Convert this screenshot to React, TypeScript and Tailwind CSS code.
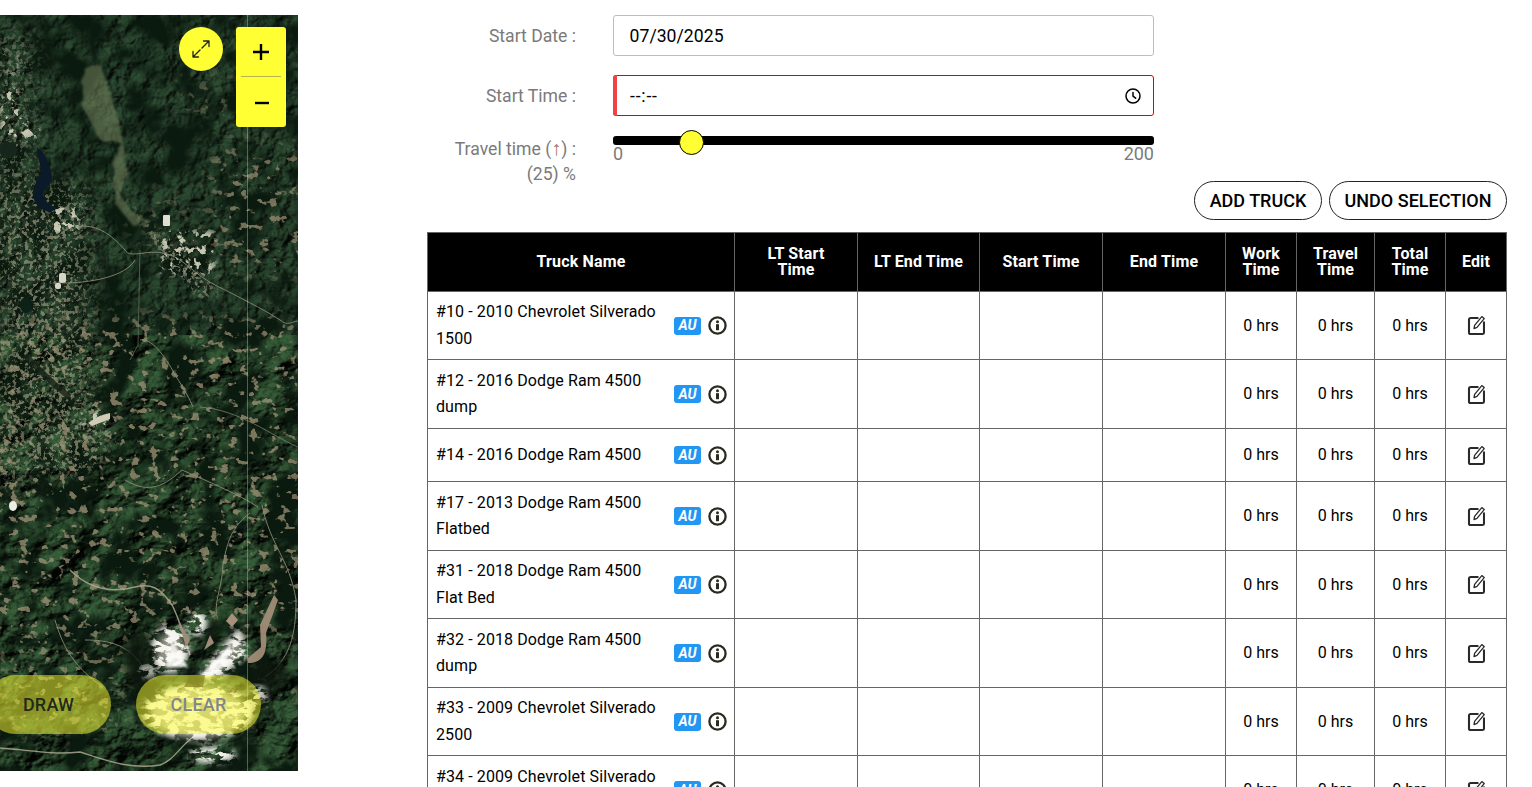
import React from "react";

function MapArt() {
  return (
    <svg viewBox="0 0 298 756" className="block w-full h-full" preserveAspectRatio="none">
      <defs>
        <filter id="terrain" x="0" y="0" width="100%" height="100%" colorInterpolationFilters="sRGB">
          <feTurbulence type="fractalNoise" baseFrequency="0.022 0.03" numOctaves="6" seed="12" />
          <feDiffuseLighting surfaceScale="16" diffuseConstant="1" lightingColor="#3f6a42">
            <feDistantLight azimuth="215" elevation="42" />
          </feDiffuseLighting>
        </filter>
        <filter id="flat" x="0" y="0" width="100%" height="100%" colorInterpolationFilters="sRGB">
          <feTurbulence type="fractalNoise" baseFrequency="0.07" numOctaves="4" seed="5" />
          <feDiffuseLighting surfaceScale="7" diffuseConstant="1" lightingColor="#33543a">
            <feDistantLight azimuth="215" elevation="50" />
          </feDiffuseLighting>
        </filter>
        <filter id="dark" x="0" y="0" width="100%" height="100%" colorInterpolationFilters="sRGB">
          <feTurbulence type="fractalNoise" baseFrequency="0.03" numOctaves="3" seed="41" />
          <feColorMatrix type="matrix" values="0 0 0 0 0.04  0 0 0 0 0.1  0 0 0 0 0.06  4 0 0 0 -1.75" />
        </filter>
        <filter id="clear" x="0" y="0" width="100%" height="100%" colorInterpolationFilters="sRGB">
          <feTurbulence type="fractalNoise" baseFrequency="0.1 0.12" numOctaves="3" seed="23" />
          <feColorMatrix type="matrix" values="0 0 0 0 0.62  0 0 0 0 0.57  0 0 0 0 0.46  12 0 0 0 -7.5" />
          <feGaussianBlur stdDeviation="0.7" />
        </filter>
        <filter id="urban" x="0" y="0" width="100%" height="100%" colorInterpolationFilters="sRGB">
          <feTurbulence type="fractalNoise" baseFrequency="0.24" numOctaves="3" seed="9" />
          <feColorMatrix type="matrix" values="0 0 0 0 0.6  0 0 0 0 0.59  0 0 0 0 0.49  8 0 0 0 -4.1" />
          <feGaussianBlur stdDeviation="0.6" />
        </filter>
        <filter id="bright" x="0" y="0" width="100%" height="100%" colorInterpolationFilters="sRGB">
          <feTurbulence type="fractalNoise" baseFrequency="0.13" numOctaves="3" seed="31" />
          <feColorMatrix type="matrix" values="0 0 0 0 0.85  0 0 0 0 0.84  0 0 0 0 0.76  12 0 0 0 -6.8" />
          <feGaussianBlur stdDeviation="0.5" />
        </filter>
        <filter id="snow" x="0" y="0" width="100%" height="100%" colorInterpolationFilters="sRGB">
          <feTurbulence type="fractalNoise" baseFrequency="0.09 0.16" numOctaves="4" seed="17" />
          <feColorMatrix type="matrix" values="0 0 0 0 0.97  0 0 0 0 0.96  0 0 0 0 0.94  8 0 0 0 -3.4" />
          <feGaussianBlur stdDeviation="0.45" />
        </filter>
        <filter id="rough" x="-10%" y="-10%" width="120%" height="120%">
          <feTurbulence type="fractalNoise" baseFrequency="0.08" numOctaves="2" seed="3" result="n" />
          <feDisplacementMap in="SourceGraphic" in2="n" scale="8" />
          <feGaussianBlur stdDeviation="0.8" />
        </filter>
        <filter id="soft"><feGaussianBlur stdDeviation="0.55" /></filter>
        <filter id="soft1"><feGaussianBlur stdDeviation="1" /></filter>
        <filter id="b6" x="-30%" y="-30%" width="160%" height="160%"><feGaussianBlur stdDeviation="7" /></filter>
        <filter id="b10" x="-30%" y="-30%" width="160%" height="160%"><feGaussianBlur stdDeviation="12" /></filter>
        <filter id="b4" x="-30%" y="-30%" width="160%" height="160%"><feGaussianBlur stdDeviation="3" /></filter>
        <mask id="mClear" maskUnits="userSpaceOnUse" x="0" y="0" width="298" height="756">
          <rect width="298" height="756" fill="#000" />
          <g filter="url(#b10)" fill="#fff">
            <rect x="210" y="130" width="100" height="130" opacity="0.9" />
            <rect x="130" y="175" width="60" height="60" opacity="0.5" />
            <rect x="180" y="60" width="60" height="40" opacity="0.6" />
            <rect x="-20" y="300" width="330" height="320" opacity="0.95" />
            <rect x="0" y="620" width="125" height="100" opacity="0.8" />
            <rect x="250" y="640" width="60" height="80" opacity="0.5" />
          </g>
        </mask>
        <mask id="mUrban" maskUnits="userSpaceOnUse" x="0" y="0" width="298" height="756">
          <rect width="298" height="756" fill="#000" />
          <g filter="url(#b10)" fill="#fff">
            <rect x="-20" y="20" width="55" height="240" opacity="0.7" />
            <rect x="0" y="170" width="90" height="240" />
            <rect x="-10" y="380" width="40" height="90" />
          </g>
          <ellipse cx="66" cy="430" rx="44" ry="30" fill="#fff" filter="url(#b6)" />
          <path d="M135 195 L190 245 L220 280 L200 285 L150 225 Z" fill="#fff" filter="url(#b4)" />
        </mask>
        <mask id="mBright" maskUnits="userSpaceOnUse" x="0" y="0" width="298" height="756">
          <rect width="298" height="756" fill="#000" />
          <g filter="url(#b4)" fill="#fff">
            <path d="M0 150 L28 125 L45 120 L20 95 L14 60 L32 20 L8 60 L0 90 Z" />
            <rect x="50" y="190" width="30" height="30" />
            <rect x="160" y="215" width="55" height="45" />
            <rect x="80" y="395" width="35" height="20" />
          </g>
        </mask>
        <mask id="mSnow" maskUnits="userSpaceOnUse" x="0" y="0" width="298" height="756">
          <rect width="298" height="756" fill="#000" />
          <g filter="url(#b4)" fill="#fff">
            <ellipse cx="170" cy="634" rx="19" ry="24" />
            <ellipse cx="197" cy="608" rx="10" ry="13" />
            <path d="M200 658 L222 632 L240 612 L248 640 L214 668 Z" />
            <ellipse cx="198" cy="697" rx="56" ry="28" />
            <ellipse cx="212" cy="740" rx="24" ry="8" />
            <ellipse cx="148" cy="656" rx="10" ry="7" opacity="0.7" />
            <ellipse cx="258" cy="682" rx="9" ry="12" opacity="0.8" />
          </g>
        </mask>
      </defs>
      <rect width="298" height="756" filter="url(#terrain)" />
      <rect width="298" height="320" filter="url(#flat)" opacity="0.85" />
      <rect width="298" height="756" filter="url(#dark)" />
      <rect width="298" height="756" fill="#0e1c10" opacity="0.14" />
      <rect width="298" height="756" filter="url(#clear)" mask="url(#mClear)" opacity="0.8" />
      <rect width="298" height="756" filter="url(#urban)" mask="url(#mUrban)" opacity="0.7" />
      <rect width="298" height="756" filter="url(#bright)" mask="url(#mBright)" opacity="0.9" />

      <g filter="url(#rough)" opacity="0.55">
        <path d="M84 52 L102 50 L107 66 L122 120 L128 160 L119 178 L130 195 L150 208 L132 210 L115 188 L113 150 L122 128 L100 125 L82 90 Z" fill="#74835d" />
      </g>
      <path d="M37 132 C45 138 50 148 52 162 C52 170 44 174 43 178 C44 186 50 190 57 193 L50 198 C44 194 36 192 34 184 C32 176 35 168 41 158 C42 150 37 142 37 132 Z" fill="#0b1a28" />
      <ellipse cx="8" cy="135" rx="9" ry="8" fill="#16281a" filter="url(#soft)" />
      <ellipse cx="26" cy="290" rx="6" ry="8" fill="#0e2018" filter="url(#soft)" />
      <ellipse cx="13" cy="491" rx="4" ry="5" fill="#ecece4" filter="url(#soft)" />
      <rect x="59" y="258" width="7" height="10" rx="2" fill="#d5d5c8" filter="url(#soft)" />
      <rect x="55" y="268" width="6" height="6" rx="2" fill="#d5d5c8" filter="url(#soft)" />
      <rect x="163" y="200" width="7" height="11" rx="1" fill="#e0dfd0" filter="url(#soft)" />
      <path d="M88 408 Q98 400 110 398 L110 404 L92 411 Z" fill="#cfcdb8" filter="url(#soft)" />
      <path d="M25 340 Q55 372 70 382" fill="none" stroke="#122418" strokeWidth="6" opacity="0.8" filter="url(#soft)" />

      <g fill="none" stroke="#8d8f76" strokeWidth="1" opacity="0.85" filter="url(#soft)">
        <path d="M75 212 C95 208 110 218 125 235 C130 245 150 232 170 240 C185 245 195 260 215 270 C235 280 265 295 280 305 C288 312 292 306 298 306" />
        <path d="M62 268 C90 268 125 262 135 245" />
        <path d="M140 325 C150 322 165 340 175 360 C185 375 190 385 193 392" />
        <path d="M70 555 C85 570 105 580 135 572 C150 568 160 572 172 590 C180 605 185 625 190 640" stroke="#aaa890" strokeWidth="1.5" />
        <path d="M250 498 C235 510 228 520 223 550 C222 575 212 590 218 605" />
        <path d="M262 490 C270 530 290 545 296 585 C296 620 290 645 265 662" />
        <path d="M85 625 C110 625 130 630 145 655" />
        <path d="M0 733 C30 735 50 740 80 737 C105 745 130 755 160 750 C175 745 180 730 198 718" stroke="#aaa890" strokeWidth="1.4" />
        <path d="M55 605 C65 640 80 655 100 670" />
        <path d="M125 465 C150 480 165 470 182 455 C205 465 240 480 258 492" />
        <path d="M200 392 C240 395 270 420 298 432" strokeWidth="0.8" />
        <path d="M140 235 L138 330 L130 345" strokeWidth="0.6" />
      </g>

      <g filter="url(#b4)" fill="#081208" opacity="0.75">
        <ellipse cx="138" cy="645" rx="13" ry="30" />
        <ellipse cx="190" cy="655" rx="12" ry="6" />
        <path d="M205 610 L225 600 L212 640 Z" />
        <ellipse cx="270" cy="660" rx="20" ry="16" />
      </g>
      <g filter="url(#b4)">
        <ellipse cx="198" cy="697" rx="48" ry="26" fill="#c8c5b4" opacity="0.85" />
        <ellipse cx="170" cy="636" rx="14" ry="18" fill="#a8a598" opacity="0.8" />
        <path d="M205 656 L225 632 L240 618 L242 636 L214 662 Z" fill="#a8a598" opacity="0.8" />
      </g>
      <rect width="298" height="756" filter="url(#snow)" mask="url(#mSnow)" />
      <g filter="url(#soft1)" fill="#fbfbf8">
        <path d="M172 625 L188 652 L166 652 Z" opacity="0.85" />
        <path d="M200 660 L232 628 L226 650 L208 664 Z" opacity="0.85" />
      </g>
      <g filter="url(#soft)">
        <path d="M190 660 L205 660 L203 672 L184 672 Z" fill="#0e160f" opacity="0.75" />
        <path d="M178 605 L186 632 L190 625 Z" fill="#9f8b78" />
        <path d="M204 635 L210 620 L214 628 Z" fill="#9f8b78" />
        <path d="M248 648 C262 648 268 640 266 618 L278 585 L274 580 L260 610 L261 632 L248 643 Z" fill="#a6917a" opacity="0.9" />
        <path d="M232 612 L238 605 L232 598 L226 606 Z" fill="#a6917a" />
      </g>
      <rect x="247" y="0" width="1" height="756" fill="#ffffff" opacity="0.3" />
    </svg>
  );
}

function Expand() {
  return (
    <svg width="20" height="20" viewBox="0 0 20 20" fill="none" stroke="#222" strokeWidth="1.3" strokeLinecap="round" strokeLinejoin="round">
      <path d="M11 9 L18 2 M12.5 2 H18 V7.5" />
      <path d="M9 11 L2 18 M2 12.5 V18 H7.5" />
    </svg>
  );
}

function ClockIcon() {
  return (
    <svg width="16" height="16" viewBox="0 0 16 16" fill="none" stroke="#000" strokeWidth="1.5" strokeLinecap="round" strokeLinejoin="round">
      <circle cx="8" cy="8" r="7" />
      <path d="M8 4.5 V8.2 L10.6 10.2" />
    </svg>
  );
}

function InfoIcon() {
  return (
    <svg width="19" height="19" viewBox="0 0 19 19" className="shrink-0">
      <circle cx="9.5" cy="9.5" r="8.1" fill="none" stroke="#2a2a1e" strokeWidth="2.3" />
      <circle cx="9.5" cy="5.8" r="1.5" fill="#2a2a1e" />
      <rect x="8" y="8.2" width="3" height="6" fill="#2a2a1e" />
    </svg>
  );
}

function EditIcon() {
  return (
    <svg width="18" height="21" viewBox="-1 1 18 21" fill="none" className="block mx-auto">
      <path d="M10.5 4 H2.6 C1.7 4 1 4.7 1 5.6 V18.4 C1 19.3 1.7 20 2.6 20 H14.4 C15.3 20 16 19.3 16 18.4 V7.5" stroke="#2a2a2a" strokeWidth="2.1" />
      <path d="M6 14.6 L6.6 11.4 L13.8 2.6 L16.2 4.6 L9 13.4 Z" stroke="#2a2a2a" strokeWidth="1.3" strokeLinejoin="round" fill="#fff" />
    </svg>
  );
}

const rows: { name: string[]; h: string }[] = [
  { name: ["#10 - 2010 Chevrolet Silverado", "1500"], h: "h-[68px]" },
  { name: ["#12 - 2016 Dodge Ram 4500", "dump"], h: "h-[69px]" },
  { name: ["#14 - 2016 Dodge Ram 4500"], h: "h-[53px]" },
  { name: ["#17 - 2013 Dodge Ram 4500", "Flatbed"], h: "h-[69px]" },
  { name: ["#31 - 2018 Dodge Ram 4500", "Flat Bed"], h: "h-[68px]" },
  { name: ["#32 - 2018 Dodge Ram 4500", "dump"], h: "h-[69px]" },
  { name: ["#33 - 2009 Chevrolet Silverado", "2500"], h: "h-[68px]" },
  { name: ["#34 - 2009 Chevrolet Silverado", "3500"], h: "h-[69px]" },
];

const th = "border border-[#666] px-2 py-0 text-center font-bold text-base leading-4 align-middle tracking-[0.15px]";
const td = "border border-[#666] p-0 text-center align-middle";

function FormLabel({ children }: { children: React.ReactNode }) {
  return <div className="w-[149px] pt-[1px] text-right text-[17.6px] text-[#7a7a7a] leading-[25px] shrink-0">{children}</div>;
}

export default function App() {
  return (
    <div className="h-[787px] overflow-hidden bg-white flex items-start pt-[15px] font-['Roboto',sans-serif] text-black">
      <div className="relative w-[298px] h-[756px] overflow-hidden shrink-0">
        <MapArt />
        <div className="absolute left-[179px] top-[12px] w-[44px] h-[44px] rounded-full bg-[#ffff33] flex items-center justify-center">
          <Expand />
        </div>
        <div className="absolute left-[236px] top-[12px] w-[50px] h-[100px] rounded-[3px] bg-[#ffff33] flex flex-col items-center">
          <div className="h-[49px] w-full flex items-center justify-center">
            <svg width="16" height="16" viewBox="0 0 16 16"><path d="M8 0 V16 M0 8 H16" stroke="#000" strokeWidth="2.4" /></svg>
          </div>
          <div className="h-px w-[40px] bg-[#b3b34d]" />
          <div className="h-[50px] w-full flex items-center justify-center pt-[2px] pl-[2px]">
            <svg width="14" height="4" viewBox="0 0 14 4"><path d="M0 2 H14" stroke="#000" strokeWidth="2.4" /></svg>
          </div>
        </div>
        <div className="absolute left-[-14px] top-[660px] w-[125px] h-[59px] rounded-full bg-[#ffff33]/50 flex items-center justify-center text-[18px] font-medium text-[#1f2a1a] tracking-[0.2px]">DRAW</div>
        <div className="absolute left-[136px] top-[660px] w-[125px] h-[59px] rounded-full bg-[#ffff33]/50 flex items-center justify-center text-[18px] font-medium text-[#84848c] tracking-[0.2px]">CLEAR</div>
      </div>

      <div className="ml-[129px] w-[1080px] shrink-0">
        <div className="flex items-center h-[41px]">
          <FormLabel>Start Date :</FormLabel>
          <div className="ml-[37px] w-[541px] h-[41px] rounded-[3px] border border-[#bdbdbd] flex items-center pl-[15.5px] pt-[1px] text-[17.6px] tracking-[0.05px]">07/30/2025</div>
        </div>
        <div className="flex items-center h-[41px] mt-[19px]">
          <FormLabel>Start Time :</FormLabel>
          <div className="ml-[37px] w-[541px] h-[41px] rounded-[3px] border border-[#e60000] relative flex items-center justify-between pl-[16px] pr-[12px] pt-[1px] text-[17.6px]">
            <div className="absolute left-[-1px] top-[-1px] bottom-[-1px] w-[4px] rounded-l-[3px] bg-[#ef4444]" />
            <span className="tracking-[0.8px]">--:--</span>
            <ClockIcon />
          </div>
        </div>
        <div className="flex items-start mt-[20px]">
          <FormLabel>
            <div>Travel time (<span className="text-[20px] text-[#a5785a] leading-[20px]">↑</span>) :</div>
            <div>(25) %</div>
          </FormLabel>
          <div className="ml-[37px] w-[541px]">
            <div className="relative h-[9px] rounded-[3px] bg-black">
              <div className="absolute left-[66px] top-[-6px] w-[25px] h-[25px] rounded-full bg-[#ffff33] border border-black" />
            </div>
            <div className="flex justify-between text-[18px] text-[#7a7a7a] leading-[18px]">
              <span>0</span>
              <span>200</span>
            </div>
          </div>
        </div>
        <div className="flex justify-end gap-[7px] mt-[-6px]">
          <div className="w-[128px] h-[39px] rounded-full border border-[#222] flex items-center justify-center pb-[1px] text-[18px] font-medium">ADD TRUCK</div>
          <div className="w-[178px] h-[39px] rounded-full border border-[#222] flex items-center justify-center pb-[1px] text-[18px] font-medium">UNDO SELECTION</div>
        </div>
        <table className="mt-[12px] w-[1079px] table-fixed border-collapse text-base">
          <colgroup>
            <col className="w-[307px]" />
            <col className="w-[123px]" />
            <col className="w-[122px]" />
            <col className="w-[123px]" />
            <col className="w-[123px]" />
            <col className="w-[71px]" />
            <col className="w-[78px]" />
            <col className="w-[71px]" />
            <col className="w-[61px]" />
          </colgroup>
          <thead>
            <tr className="h-[59px] bg-black text-white">
              <th className={th}>Truck Name</th>
              <th className={th}>LT Start<br />Time</th>
              <th className={th}>LT End Time</th>
              <th className={th}>Start Time</th>
              <th className={th}>End Time</th>
              <th className={th}>Work<br />Time</th>
              <th className={th}>Travel<br />Time</th>
              <th className={th}>Total<br />Time</th>
              <th className={th}>Edit</th>
            </tr>
          </thead>
          <tbody>
            {rows.map((r) => (
              <tr key={r.name[0]} className={r.h}>
                <td className={td}>
                  <div className="flex items-center justify-between pl-[8px] pr-[7px]">
                    <div className="text-left leading-[26.4px] tracking-[0.1px]">
                      {r.name.map((l) => (
                        <div key={l}>{l}</div>
                      ))}
                    </div>
                    <div className="flex items-center gap-[7px]">
                      <span className="w-[27px] h-[18px] rounded-[3px] bg-[#2196f3] text-white text-[14px] font-bold italic flex items-center justify-center">AU</span>
                      <InfoIcon />
                    </div>
                  </div>
                </td>
                <td className={td} />
                <td className={td} />
                <td className={td} />
                <td className={td} />
                <td className={td}>0 hrs</td>
                <td className={td}>0 hrs</td>
                <td className={td}>0 hrs</td>
                <td className={td}><EditIcon /></td>
              </tr>
            ))}
          </tbody>
        </table>
      </div>
    </div>
  );
}
